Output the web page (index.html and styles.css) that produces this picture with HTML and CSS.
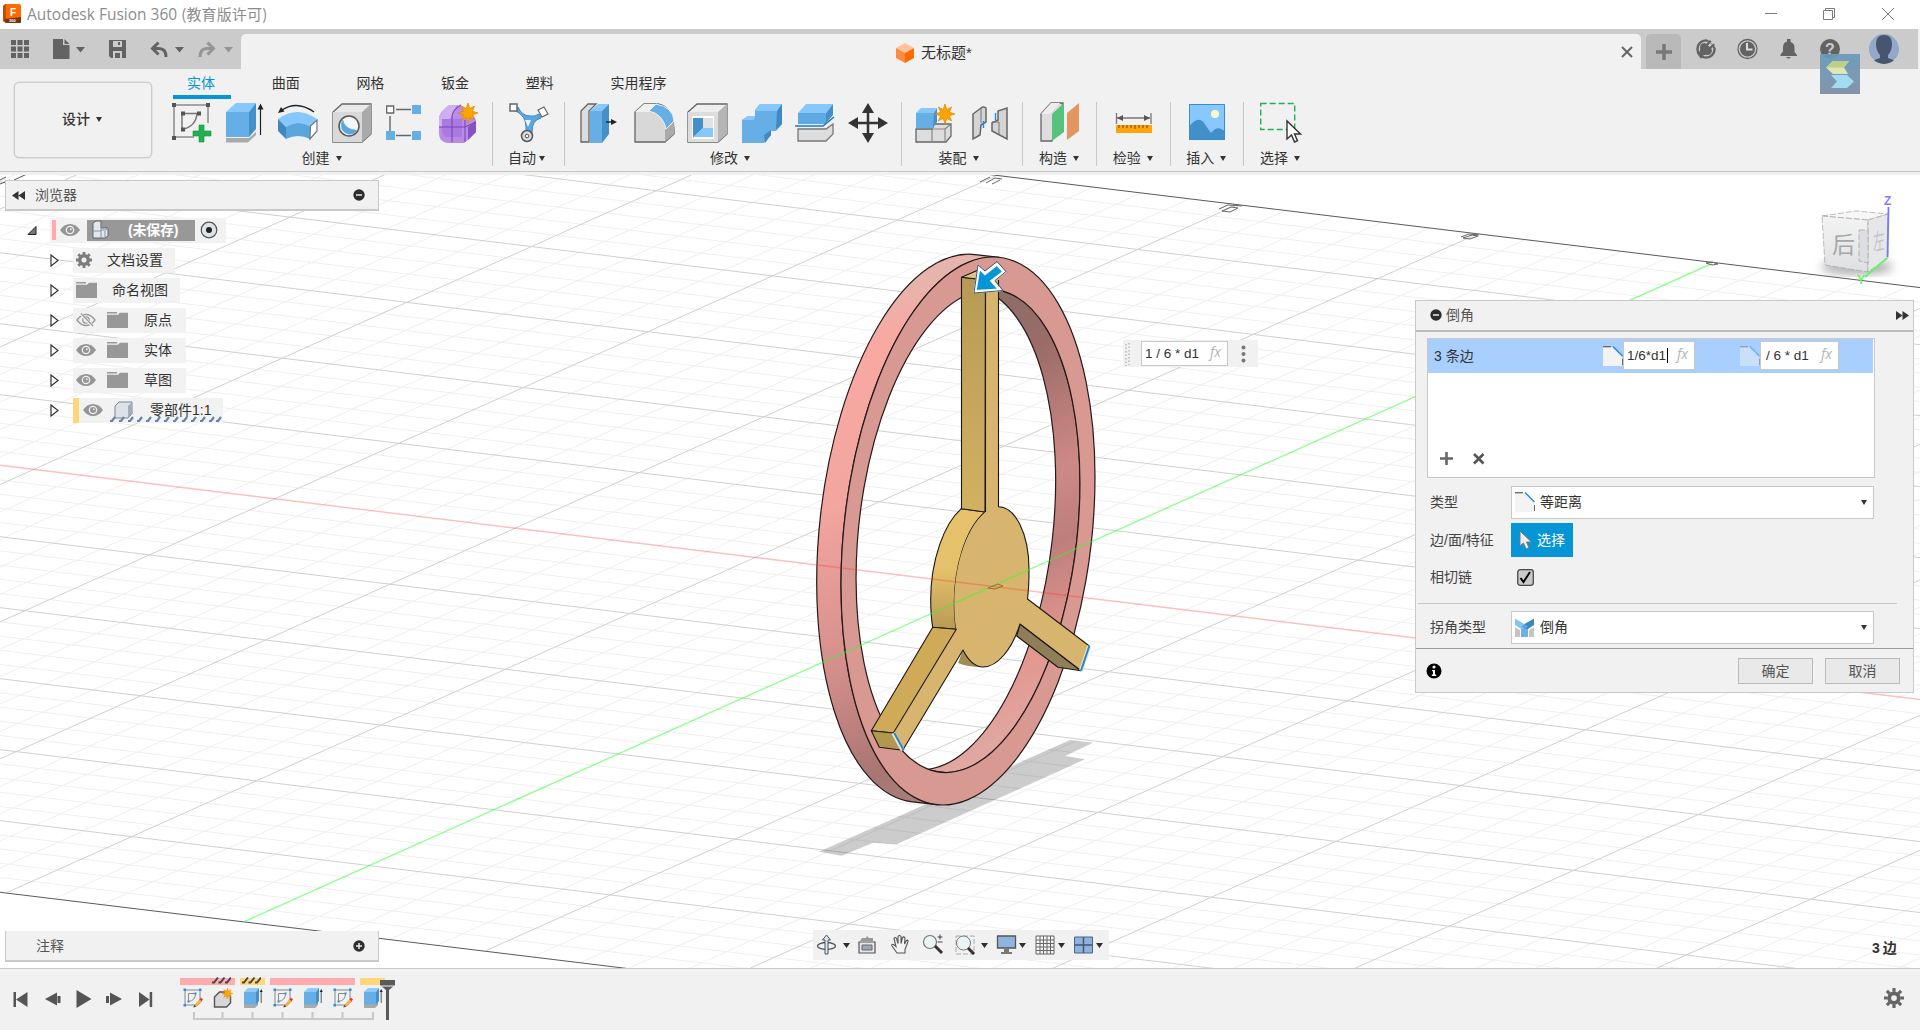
FILE: index.html
```html
<!DOCTYPE html>
<html lang="zh-CN">
<head>
<meta charset="utf-8">
<title>Autodesk Fusion 360</title>
<link rel="stylesheet" href="styles.css">
</head>
<body>
<svg width="0" height="0" class="defs" aria-hidden="true">
  <defs>
    <symbol id="star" viewBox="0 0 20 20"><path d="M10 0l1.800 5.600L16.600 3l-2.200 5.200L20 10l-5.600 1.800 2.200 5-4.800-2.400L10 20l-1.800-5.600L3.400 16.800l2.200-5L0 10l5.600-1.800L3.400 3l4.800 2.600z" fill="#fca400" stroke="#d98a00" stroke-width=".7"/></symbol>
    <symbol id="eye" viewBox="0 0 20 12"><path d="M0 6Q4 0 10 0t10 6q-4 6-10 6T0 6z" fill="#959595"/><circle cx="10" cy="6" r="4.300" fill="#f1f1f1"/><circle cx="10" cy="6" r="3" fill="#959595"/><path d="M10 6V4.500h1.600V6z" fill="#f1f1f1"/></symbol>
    <symbol id="eye-off" viewBox="0 0 20 14"><path d="M1 7q4-5.500 9-5.500T19 7q-4 5.500-9 5.500T1 7z" fill="none" stroke="#999" stroke-width="1.300"/><circle cx="10" cy="7" r="3.200" fill="none" stroke="#999" stroke-width="1.300"/><path d="M4 0l13 13.500" stroke="#f1f1f1" stroke-width="3"/><path d="M5 .5l12 12.500" stroke="#999" stroke-width="1.200"/></symbol>
    <symbol id="folder" viewBox="0 0 21 16"><path d="M0 0h10v1.500H0zM0 2.800h11l2-2h8V16H0z" fill="#989898"/></symbol>
    <symbol id="tri" viewBox="0 0 9 13"><path d="M1 1v11l7-5.500z" fill="#fff" stroke="#333" stroke-width="1.200"/></symbol>
    <symbol id="minus" viewBox="0 0 12 12"><circle cx="6" cy="6" r="5.700" fill="#2e2e2e"/><path d="M3 6h6" stroke="#eee" stroke-width="1.500"/></symbol>
    <symbol id="chamfer" viewBox="0 0 20 20"><path d="M0 1h9l10 9v10H0z" fill="#f3f3f3"/><path d="M0 .7h8" stroke="#666" stroke-width="1.300"/><path d="M19.500 13v6" stroke="#666"/><path d="M10 .5l9.500 9.500" stroke="#2a8be0" stroke-width="1.500"/></symbol>
    <symbol id="t-sketch" viewBox="0 0 20 20"><path d="M2 2h15v12M2 2v15h11" fill="none" stroke="#888"/><path d="M5.500 5.500h7q0 7-7 8z" fill="none" stroke="#888"/><g fill="#2f8fdd"><path d="M.5.500h2.500v2.500H.5zM16 .5h2.500v2.500H16zM.5 16h2.500v2.500H.5zM11.500 4.500h2v2h-2zM4.500 12.500h2v2h-2z"/></g><path d="M12 17l5-6 2 2-5 5-3 1z" fill="#f6b73c" stroke="#c98a2c" stroke-width=".5"/><path d="M16.500 11.500l1.500-2 2 2-1.500 1.700z" fill="#e33"/><path d="M11.300 17l-1 2.500 3-1z" fill="#444"/></symbol>
    <symbol id="t-box" viewBox="0 0 20 20"><path d="M1 16h11l3-3v4l-3 3H1z" fill="#aaa"/><path d="M1 4l4-4h11l-3 4z" fill="#8ccbfb"/><path d="M1 4h12v12.500H1z" fill="#66aee6"/><path d="M13 4l3-4v13l-3 3.500z" fill="#4390ca"/><path d="M18.200 15V3" stroke="#444" stroke-width=".9"/><path d="M16.700 4l1.500-3 1.500 3z" fill="#222"/></symbol>
    <symbol id="t-form" viewBox="0 0 20 20"><path d="M1.500 9l5-5h7l4 4v7l-4 4h-12z" fill="#d7d7d7" stroke="#555" stroke-width="1.400"/></symbol>
    <symbol id="hatch" viewBox="0 0 19 8"><path d="M0 6.500h2l4-5M6.500 6.500h2l4-5M13 6.500h2l4-5" fill="none" stroke="#444" stroke-width="2"/></symbol>
  </defs>
</svg>
<div class="app">
  <header class="title-bar">
    <svg class="logo" width="20" height="22" viewBox="0 0 20 22"><path d="M2 1h14q2 0 2 2v16q0 1-2 1H3L0 18V3z" fill="#ff6b00"/><path d="M0 3l3-2v19l-3-2z" fill="#c64d00"/><path d="M1 16l17-2v5.500q0 .5-2 .5H3z" fill="#7c3410"/><text x="7" y="12.500" class="logo-f">F</text><text x="6" y="19" class="logo-n">360</text></svg>
    <span class="app-name">Autodesk Fusion 360 <span class="cjk">(教育版许可)</span></span>
    <svg class="win" width="150" height="20" viewBox="0 0 150 20" fill="none" stroke="#7c7c7c"><path d="M10 9.500h12M68.500 6.500h9v9h-9zM70.500 6V4.500h9v9H78M127 4l12 12M139 4l-12 12"/></svg>
  </header>
  <div class="tab-strip">
    <div class="quick">
      <svg width="241" height="40" viewBox="0 29 241 40"><g fill="#636363"><path d="M11 40h5v5h-5zM17.500 40h5v5h-5zM24 40h5v5h-5zM11 46.500h5v5h-5zM17.500 46.500h5v5h-5zM24 46.500h5v5h-5zM11 53h5v5h-5zM17.500 53h5v5h-5zM24 53h5v5h-5z"/><path d="M53 39h10v6h6.500v14H53zM64.500 39l5 5h-5zM76 47h9l-4.500 5.500zM175 47h9l-4.500 5.500z"/><path d="M109 40h17v18h-15l-2-2z"/></g><path d="M113 41h9v6h-9zM113 51h9v7h-9z" fill="#ccc"/><path d="M118 42h2v3h-2zM115 53h5v5h-5z" fill="#636363"/><path d="M153 48.500h6q7 0 7 8.500M158.500 42.500l-6 6 6 6" fill="none" stroke="#636363" stroke-width="3"/><g stroke="#959595"><path d="M213 48.500h-6q-7 0-7 8.500M207.500 42.500l6 6-6 6" fill="none" stroke-width="3"/></g><path d="M224 47h9l-4.500 5.500z" fill="#959595"/></svg>
    </div>
    <div class="doc-tab">
      <div class="doc-name">
        <svg width="18" height="20" viewBox="0 0 18 20"><path d="M9 0l9 5-9 5-9-5z" fill="#ffc29b"/><path d="M0 5l9 5v10l-9-5z" fill="#ff8b3e"/><path d="M18 5l-9 5v10l9-5z" fill="#fe6b00"/></svg>
        <span>无标题*</span>
      </div>
      <svg class="doc-close" width="12" height="12" viewBox="0 0 12 12"><path d="M1 1l10 10M11 1L1 11" stroke="#666" stroke-width="2"/></svg>
    </div>
    <div class="new-tab"><svg width="16" height="16"><path d="M8 0v16M0 8h16" stroke="#777" stroke-width="3.500"/></svg></div>
    <svg class="status" width="237" height="40" viewBox="1681 29 237 40">
      <circle cx="1706" cy="49" r="8.600" fill="none" stroke="#636363" stroke-width="2.400"/>
      <path d="M1707 39l10 1v9z" fill="#cbcbcb"/><path d="M1697 53q4-1 3-5 0-5 5-5l1 1 4-4 1.500 1.500-3.500 4 1.500 1.500 4-3.500 1.500 1.500-4 4 1 1q0 5-5 5-4-1-6 4z" fill="#636363"/>
      <circle cx="1747.500" cy="49" r="9.500" fill="none" stroke="#636363" stroke-width="1.300"/>
      <circle cx="1747.500" cy="49" r="7.500" fill="#636363"/><path d="M1747 43v6.500h5.500" fill="none" stroke="#ddd" stroke-width="2"/>
      <path d="M1780.500 56v-1.500l2.500-3v-4q0-5 4-6v-2.500h3.500V42q4 1 4 6v4l2.500 3v1zM1786 57h5q-2.500 3-5 0z" fill="#636363"/>
      <circle cx="1830" cy="49" r="10" fill="#636363"/><text x="1830" y="55" class="help">?</text>
      <clipPath id="av"><circle cx="1884" cy="49" r="15"/></clipPath><g clip-path="url(#av)"><path d="M1869 34h30v30h-30z" fill="#93a8c8"/><path d="M1884 35q8 0 8 9 0 7-4 11v3l8 3v4h-24v-4l8-3v-3q-4-4-4-11 0-9 8-9z" fill="#46566f"/></g>
    </svg>
  </div>
  <div class="ribbon">
    <button class="workspace">设计<i class="caret"></i></button>
    <div class="ribbon-main">
      <nav class="tabs"><a class="active">实体</a><a>曲面</a><a>网格</a><a>钣金</a><a>塑料</a><a class="wide">实用程序</a></nav>
      <div class="groups">
        <section class="g-create"><div class="icons">
          <svg width="40" height="42"><path d="M3 4v31h20M3 3h34v18" fill="none" stroke="#8a8a8a" stroke-width="1.500"/><path d="M11 11.500h15q-1 13-15 16z" fill="none" stroke="#777" stroke-width="1.500"/><path d="M1 1h4v4H1zM35 1h4v4h-4zM1 34h4v4H1zM10 9.500h4v4h-4zM26 9.500h4v4h-4zM10 25.500h4v4h-4z" fill="#555"/><path d="M28 23h5v6h7v5h-7v6h-5v-6h-6v-5h6z" fill="#21b04f" stroke="#159040" stroke-width=".6"/></svg>
          <svg width="40" height="42"><path d="M1 36h23l7-6v3l-8 7.500H1z" fill="#aaa"/><path d="M1 10l10-9h20l-7 9z" fill="#86c8fb"/><path d="M1 10h23v25H1z" fill="#66aee6"/><path d="M24 10l7-9v26l-7 8z" fill="#4390ca"/><path d="M35.500 33V5" stroke="#222" stroke-width="1.200"/><path d="M32.500 7.500l3-6 3 6z" fill="#222"/></svg>
          <svg width="42" height="42"><path d="M0 17Q19 3 39 17l-6 8q-13-8-25 0z" fill="#86c8fb"/><path d="M8 25q12-8 25 0l-1 12q-12-6-24 0z" fill="#5aa6df"/><path d="M0 17l8 8v12l-8-8z" fill="#3d88c2"/><path d="M32.500 24l6.500-6v11l-7 8z" fill="#fff" stroke="#777" stroke-width="1.200"/><path d="M4 8Q19-2 36 10" fill="none" stroke="#222" stroke-width="1.400"/><path d="M0 11l3-6 3.500 4.500z" fill="#222"/></svg>
          <svg width="40" height="42"><path d="M1 10l9-8h29v30l-9 8H1z" fill="#e9e9e9" stroke="#666" stroke-width="1.300"/><path d="M1 10h29v30H1z" fill="#d9d9d9"/><path d="M30 10l9-8v30l-9 8z" fill="#aaa"/><circle cx="17" cy="24" r="10" fill="#f5f5f5" stroke="#555" stroke-width="1.500"/><path d="M11 17q1 10 14 11-3 5-8 4.500-8-2-8-9 0-4 2-6.500z" fill="#59a7e2"/></svg>
          <svg width="40" height="42"><path d="M4 14v15M10 7.500h15M10 33.500h15" stroke="#666" stroke-width="1.400"/><path d="M.7 4h7v7h-7z" fill="#fff" stroke="#666" stroke-width="1.300"/><path d="M26 3h9v9h-9zM0 29h9v9H0zM26 29h9v9h-9z" fill="#66aee6"/></svg>
          <svg width="42" height="42"><path d="M0 15q1-5 10-12h8q13 2 19 15v12l-8 8-4 3H8q-8-2-8-9z" fill="#ba8ce8"/><path d="M0 15Q3 8 10 3h8l-4 8-2 4-9 10H0z" fill="#cfaef2"/><path d="M3 17h20v18H7q-4-2-4-7z" fill="#a97be0"/><path d="M29 25l8-6v11l-8 8z" fill="#8453c4"/><path d="M0 25h26l11-5M13 40V15q0-7 9-12M26 40V18" fill="none" stroke="#7846b8" stroke-width="1.100"/><use href="#star" x="19" y="1" width="20" height="20"/></svg>
        </div><label>创建<i class="caret"></i></label></section>
        <section class="g-auto"><div class="icons"><svg width="40" height="42"><path d="M9 5q4 9 12 9 5 1 9-2l2 4q-9 2-9 14v2h-6V25Q17 14 7 9z" fill="#5aa7e3" stroke="#3b88c4"/><path d="M16 18h6l-3 7z" fill="#f1f1f1"/><path d="M1 2h7v7H1z" fill="#fff" stroke="#666" stroke-width="1.500"/><path d="M29 8l6-3 4 7-6 3z" fill="#fff" stroke="#666" stroke-width="1.200"/><circle cx="18" cy="34" r="5.500" fill="#ddd" stroke="#555" stroke-width="1.500"/><circle cx="18" cy="34" r="1.800" fill="#fff" stroke="#555"/></svg></div><label>自动<i class="caret tight"></i></label></section>
        <section class="g-modify"><div class="icons">
          <svg width="40" height="42"><path d="M1 9l7-7h8L9 9v31H1z" fill="#ddd" stroke="#666" stroke-width="1.300"/><path d="M10 9l8-7h11l-7 7z" fill="#86c8fb"/><path d="M10 9h12v32H10z" fill="#66aee6"/><path d="M22 9l7-7v30l-7 9z" fill="#4390ca"/><path d="M26 20h9" stroke="#222" stroke-width="1.400"/><path d="M31 17l6 3-6 3z" fill="#222"/></svg>
          <svg width="42" height="42"><path d="M1 10l9-8h14q15 3 16 26v4l-9 8H1z" fill="#d8d8d8" stroke="#666" stroke-width="1.300"/><path d="M1 10l9-8h14l-8 8z" fill="#f0f0f0"/><path d="M31 28l9-8v12l-9 8z" fill="#aaa"/><path d="M15 9l7-7q17 3 18 17l-8 8Q29 12 15 9z" fill="#66aee6" stroke="#f1f1f1"/></svg>
          <svg width="42" height="42"><path d="M1 10l9-8h30v30l-9 8H1z" fill="#eee" stroke="#666" stroke-width="1.300"/><path d="M1 10h30v30H1z" fill="#ddd"/><path d="M31 10l9-8v30l-9 8z" fill="#b5b5b5"/><path d="M5 14h22v23H5z" fill="#fff"/><path d="M6 16h10v10l-10 10z" fill="#4390ca"/><path d="M6 35l10-9h10v9z" fill="#86c8fb"/><path d="M16 16h10v10H16z" fill="#e2e2e2"/></svg>
          <svg width="42" height="42"><path d="M1 18l6-4h7V8l5-6h22v20l-6 7h-5v4l-7 8H1z" fill="#66aee6"/><path d="M1 18l6-4h7l-1 4zM14 9l5-7h22l-5 7z" fill="#86c8fb"/><path d="M36 9l5-7v20l-6 6zM23 33l7-5v5l-6 8z" fill="#3f8ac6"/></svg>
          <svg width="42" height="42"><path d="M3 11l8-9h27l-7 9z" fill="#86c8fb"/><path d="M3 11h28v11H3z" fill="#5faae3"/><path d="M31 11l7-9v11l-7 8z" fill="#4390ca"/><path d="M0 24h28l11-9" fill="none" stroke="#1979c6" stroke-width="1.500"/><path d="M3 27h28l7-5v10l-7 7H3z" fill="#ddd" stroke="#777" stroke-width="1.300"/></svg>
          <svg width="42" height="42"><path d="M20 8v26M7 21h26" stroke="#333" stroke-width="2.500"/><path d="M20 1l6 10H14zM20 41l6-10H14zM0 21l10-6v12zM40 21l-10-6v12z" fill="#333"/></svg>
        </div><label>修改<i class="caret"></i></label></section>
        <section class="g-assemble"><div class="icons">
          <svg width="42" height="42"><path d="M1 27h16V22h19v12l-5 6H1z" fill="#ddd" stroke="#666" stroke-width="1.300"/><path d="M17 40V27h13v13M30 27l6-5" fill="none" stroke="#888" stroke-width="1.200"/><path d="M1 11l5-5h16l-3 5z" fill="#86c8fb"/><path d="M1 11h18v15H1z" fill="#66aee6"/><path d="M19 11l3-5v14l-4 6z" fill="#4390ca"/><use href="#star" x="20" y="2" width="20" height="20"/></svg>
          <svg width="42" height="42"><path d="M4 12l8-6q2-2 5 0v14l-5 3-1 10-7 4zM38 6v31L23 29v-8l6-3V9z" fill="#d4d4d4" stroke="#666" stroke-width="1.500"/><path d="M12 6v15M23 20h7v12" fill="none" stroke="#777"/><path d="M14.500 19v7M26.500 11v7" stroke="#188be8" stroke-width="1.400"/></svg>
        </div><label>装配<i class="caret"></i></label></section>
        <section class="g-construct"><div class="icons"><svg width="42" height="42"><path d="M1 12L11 1h12L12 39H1z" fill="#ddd" stroke="#666" stroke-width="1.300"/><path d="M1 12h9L20 1H11z" fill="#eee"/><path d="M12 12L24 1v29L12 39z" fill="#56c27d"/><path d="M27 11L39 1v28l-12 9z" fill="#e59562"/></svg></div><label>构造<i class="caret"></i></label></section>
        <section class="g-inspect"><div class="icons"><svg width="42" height="42"><path d="M2 16h33M1.500 11v11M36 11v11" stroke="#777" stroke-width="1.300"/><path d="M2 16l6-3v6zM35 16l-6-3v6z" fill="#555"/><path d="M1 23h36v8H1z" fill="#fca50a"/><path d="M4 23v3M8 23v3M12 23v3M16 23v3M20 23v4M24 23v3M28 23v3M32 23v3" stroke="#875600" stroke-width="1.200"/></svg></div><label>检验<i class="caret"></i></label></section>
        <section class="g-insert"><div class="icons"><svg width="42" height="42"><path d="M1 2h36v36H1z" fill="#86c8ff"/><path d="M1 25q10-14 17-1l5 7q7-9 14-1v8H1z" fill="#4190cb"/><circle cx="27" cy="12" r="4" fill="#fcfbc8"/><path d="M1.500 2.500h35v35h-35z" fill="none" stroke="#3d8cc8"/></svg></div><label>插入<i class="caret"></i></label></section>
        <section class="g-select"><div class="icons"><svg width="42" height="42"><path d="M.7 1.500h34v26h-34z" fill="none" stroke="#29ac55" stroke-width="1.400" stroke-dasharray="6 3"/><path d="M27 19v18l4.500-4 3 7 3-1.300-3-6.700h6z" fill="#fff" stroke="#333" stroke-width="1.400"/></svg></div><label>选择<i class="caret"></i></label></section>
      </div>
    </div>
    <svg class="capture" width="40" height="40"><defs><linearGradient id="cp" x2="0" y2="1"><stop stop-color="#6a9bbd"/><stop offset="1" stop-color="#7b8da3"/></linearGradient></defs><path d="M0 0h40v40H0z" fill="url(#cp)"/><path d="M6 13.500L13 7h16l-5 6.500 4 6.500H13z" fill="#dce8b2"/><path d="M6 13.500L13 7h16l-5 6.500z" fill="#bccf84"/><path d="M11 21h16l7 6.500-7 6.500H11l6-6.500z" fill="#9edaf3"/></svg>
  </div>
  <main class="canvas">
    <svg class="scene" width="1920" height="793" viewBox="0 175 1920 793">
      <defs>
        <linearGradient id="side" gradientUnits="userSpaceOnUse" x1="0" y1="-1" x2="0" y2="1"><stop stop-color="#e6b4ac"/><stop offset=".07" stop-color="#f7a9a2"/><stop offset=".35" stop-color="#f3a59f"/><stop offset=".65" stop-color="#d48f8b"/><stop offset=".88" stop-color="#a87572"/><stop offset=".97" stop-color="#a8807c"/><stop offset="1" stop-color="#d9c8c2"/></linearGradient>
        <linearGradient id="wall" gradientUnits="userSpaceOnUse" x1="0" y1="-.9" x2="0" y2=".9"><stop stop-color="#8a6d67"/><stop offset=".18" stop-color="#9b6c68"/><stop offset=".45" stop-color="#ce8985"/><stop offset=".6" stop-color="#bd7e7b"/><stop offset=".8" stop-color="#e2968f"/><stop offset="1" stop-color="#e0aaa3"/></linearGradient>
        <linearGradient id="bar" x2="0" y2="1"><stop stop-color="#b69a54"/><stop offset=".25" stop-color="#bea058"/><stop offset="1" stop-color="#d2b162"/></linearGradient>
        <linearGradient id="hub" x2="0" y2="1"><stop stop-color="#e7c16b"/><stop offset=".5" stop-color="#e6c16b"/><stop offset="1" stop-color="#b89a55"/></linearGradient>
        <linearGradient id="cube" x2="0" y2="1"><stop stop-color="#f4f4f4"/><stop offset="1" stop-color="#dedfe1"/></linearGradient>
        <filter id="soft"><feGaussianBlur stdDeviation="5"/></filter>
      </defs>
      <g id="grid"></g>
      <path d="M819 851.700L1070 740l23 2.700-28 13.300 20 3.300-188.300 85-23.400-1.600-31.600 13z" fill="#000" opacity=".2"/>
      <g transform="matrix(127 -54 0 268.600 968 531)" class="ring">
        <path d="M.2474-.969L.0561-1.0179A1 1 0 0 0-.4387 .9201L-.2474 .969A1 1 0 0 1 .2474-.969z" fill="url(#side)"/>
        <path d="M.1213-.8731A.8815 .8815 0 1 1-.3127 .8242A.8815 .8815 0 0 0 .1213-.8731z" fill="url(#wall)"/>
        <path fill-rule="evenodd" d="M1 0A1 1 0 1 1-1 0A1 1 0 1 1 1 0zM.8815 0A.8815 .8815 0 1 1-.8815 0A.8815 .8815 0 1 1 .8815 0z" fill="#d99993"/>
      </g>
      <g stroke="#1b1712" stroke-width="1.100" stroke-linejoin="round">
        <path d="M963 650l-5 13q9 4 24 4z" fill="#a58b51" stroke="none"/>
        <path d="M1020 624l61 46.700-23-3.400-41.300-31.300z" fill="#8f7e57"/>
        <path d="M961.300 508.700C944 524 930.700 560 930.700 600c0 11 .8 20 2 27.300l23.600 2C954.500 620 954.300 612 954.300 602c.2-32 9.700-72 30.700-90z" fill="url(#hub)"/>
        <path d="M961.500 277.300l24 2.700-.5 232-23.500-3.300z" fill="url(#bar)"/>
        <path d="M961.500 277.300l15-6.600 22 4-13 5.300z" fill="#ddc28a"/>
        <path d="M985.500 280l13-4v230.700C1015 507 1029 533 1029 570c0 10-.3 20-1.500 29l61.800 47-8.300 24.700-61-46.700C1012 650 997 667 983 667c-9 0-15-7-20-17l-60.300 100.300-9.400-17.300 63-103.700C954.500 620 954.300 612 954.300 602c.2-32 9.700-72 31.200-90z" fill="#d7b56e" stroke="none"/>
        <path d="M985.500 280v232M998.500 280v226.700C1015 507 1029 533 1029 570c0 10-.3 20-1.500 29l61.800 47M1081 670.700l-61-46.700C1012 650 997 667 983 667c-9 0-15-7-20-17l-60.300 100.300" fill="none"/>
        <path d="M932.700 627.300l23.600 2-63 103.700-22-2.300z" fill="#cfab59"/>
        <path d="M871.300 730.700l22 2.300 9.400 17.300-23.400-3z" fill="#b19750"/>
      </g>
      <path d="M893.300 733l9.400 17.300M1089.300 646l-8.300 24.700" stroke="#f4e4b8" stroke-width="4"/>
      <path d="M894.300 733l9.400 17.300M1089.300 646l-8.300 24.700" stroke="#1288ee" stroke-width="2"/>
      <path d="M0 465.300L1920 699.500" stroke="#ff2a2a" stroke-opacity=".3" stroke-width="1.400"/>
      <path d="M244.600 921.500L1712 263.500" stroke="#28ff28" stroke-opacity=".5" stroke-width="1.400"/>
      <path d="M988 588l10-4 5 2-8 3z" fill="none" stroke="#a06b35"/>
      <path d="M975 291.500l4-24 6 6 12-9.500 7 8-12 9 8 9z" fill="#0696d7" stroke="#fff" stroke-width="3"/><path d="M974 293l4-28 7 6 12-9.500 9 10-11 9 8 10z" fill="none" stroke="#3c5b7a"/>
      <g class="ticks" fill="none" stroke="#666"><path d="M980 182l10-5M986 183l9-5 7 1M992 184l8-4M1219 209l9-4 14 1M1222 211l9-4 7 1-8 4zM1461 237l8-3 10 1M1463 238l9-3 6 1-8 3zM1706 263l6 2 6-1-6-2z"/></g>
      <path d="M0 184l10-4M14 180l13-6M0 180l6-3" stroke="#555"/>
      <ellipse cx="1857" cy="267" rx="36" ry="8" fill="#777" opacity=".55" filter="url(#soft)"/>
      <g class="view-cube"><path d="M1822 216l34-5 32 3-20 6z" fill="#f7f7f7"/><path d="M1822 216l46 4v52l-43-7z" fill="url(#cube)"/><path d="M1868 220l20-6v44l-20 14z" fill="#e7e7ea"/><path d="M1859 230h9v33l-9-2z" fill="#dcdee4" stroke="none"/>
        <text x="1832" y="253">后</text><text class="faint" transform="matrix(.5 -.12 0 1 1873 251)">左</text></g>
      <path d="M1888.500 207l-1 50" stroke="#7777ff" stroke-width="1.800"/><path d="M1887 258l-22 19" stroke="#62f862" stroke-width="1.800"/>
      <text x="1884" y="204.500" class="axis z">Z</text><text x="1857" y="284" class="axis y">Y</text>
    </svg>
    <div class="browser">
      <div class="panel-head"><svg width="13" height="9"><path d="M6.500 0v9L0 4.500zM13 0v9L6.500 4.500z" fill="#333"/></svg><span>浏览器</span><svg width="12" height="12"><use href="#minus"/></svg></div>
      <ul class="tree">
        <li class="root"><svg class="arrow" width="10" height="9"><path d="M9 .5V8.500H1z" fill="#777" stroke="#222"/></svg><div class="chip"><i class="mark pink"></i><svg width="20" height="12"><use href="#eye"/></svg><div class="sel"><svg width="20" height="20"><path d="M2 3l3-2h5v7h7v8l-3 2H2z" fill="#e3e8ee" stroke="#5d6670"/><path d="M2 11h8V3M10 11v7M10 10h5l2-2M14 11v6" fill="none" stroke="#8a949f"/></svg><b>(未保存)</b></div><svg width="18" height="18"><circle cx="9" cy="9" r="7.800" fill="#dfe3e8" stroke="#555" stroke-width="1.200"/><circle cx="9" cy="9" r="3" fill="#222"/></svg></div></li>
        <li><svg class="arrow" width="9" height="13"><use href="#tri"/></svg><div class="chip w1"><svg width="16" height="16"><circle cx="8" cy="8" r="4.300" fill="none" stroke="#7d7d7d" stroke-width="3.600"/><path d="M8 0v3M8 13v3M0 8h3M13 8h3M2.300 2.300l2.200 2.200M11.500 11.500l2.200 2.200M13.700 2.300l-2.200 2.200M4.500 11.500l-2.200 2.200" stroke="#7d7d7d" stroke-width="2.800"/></svg><span>文档设置</span></div></li>
        <li><svg class="arrow" width="9" height="13"><use href="#tri"/></svg><div class="chip w2"><svg width="21" height="16"><use href="#folder"/></svg><span>命名视图</span></div></li>
        <li><svg class="arrow" width="9" height="13"><use href="#tri"/></svg><div class="chip w3"><svg width="20" height="14"><use href="#eye-off"/></svg><svg width="21" height="16"><use href="#folder"/></svg><span>原点</span></div></li>
        <li><svg class="arrow" width="9" height="13"><use href="#tri"/></svg><div class="chip w3"><svg width="20" height="12"><use href="#eye"/></svg><svg width="21" height="16"><use href="#folder"/></svg><span>实体</span></div></li>
        <li><svg class="arrow" width="9" height="13"><use href="#tri"/></svg><div class="chip w3"><svg width="20" height="12"><use href="#eye"/></svg><svg width="21" height="16"><use href="#folder"/></svg><span>草图</span></div></li>
        <li><svg class="arrow" width="9" height="13"><use href="#tri"/></svg><div class="chip w4"><i class="mark gold"></i><svg width="20" height="12"><use href="#eye"/></svg><svg class="body-icon" width="19" height="18"><path d="M1 5l4-4h13v12l-4 4H1z" fill="#dde2e8" stroke="#7d868f"/><path d="M14 5l4-4v12l-4 4z" fill="#a5adb6"/></svg><span>零部件1:1</span><svg class="squiggle" width="112" height="6"><path d="M0 5h2l3-4M9 5h2l3-4M18 5h2l3-4M27 5h2l3-4M36 5h2l3-4M45 5h2l3-4M54 5h2l3-4M63 5h2l3-4M72 5h2l3-4M81 5h2l3-4M90 5h2l3-4M99 5h2l3-4M106 5h2l3-4" fill="none" stroke="#6a83a8" stroke-width="2.200"/></svg></div></li>
      </ul>
    </div>
    <div class="panel-head comments"><span>注释</span><svg width="12" height="12"><use href="#minus"/><path d="M6 3v6" stroke="#eee" stroke-width="1.500"/></svg></div>
    <div class="float-input"><svg width="10" height="26"><path d="M3 3v22M6 2v22" stroke="#bbb" stroke-width="1.500" stroke-dasharray="1.500 2"/></svg><div class="field">1 / 6 * d1<em>fx</em></div><svg width="5" height="18" fill="#777"><circle cx="2.500" cy="2.500" r="2"/><circle cx="2.500" cy="9" r="2"/><circle cx="2.500" cy="15.500" r="2"/></svg></div>
    <aside class="dialog">
      <div class="dlg-head"><svg width="12" height="12"><use href="#minus"/></svg><span>倒角</span><svg width="13" height="9"><path d="M0 0v9l6.500-4.500zM6.500 0v9L13 4.500z" fill="#333"/></svg></div>
      <div class="dlg-body">
        <div class="edges">
          <div class="edge-row"><span>3 条边</span><svg width="20" height="20"><use href="#chamfer"/></svg><div class="field f1">1/6*d1<i></i><em>fx</em></div><svg class="dim" width="20" height="20"><use href="#chamfer"/></svg><div class="field f2">/ 6 * d1<em>fx</em></div></div>
          <svg class="edge-tools" width="60" height="14"><path d="M6.500 0v13M0 6.500h13" stroke="#666" stroke-width="2.600"/><path d="M34 2l9.500 9.500M43.500 2L34 11.500" stroke="#555" stroke-width="2.600"/></svg>
        </div>
        <div class="row r-type"><span>类型</span><div class="select"><svg width="20" height="20"><use href="#chamfer"/></svg>等距离<i class="caret"></i></div></div>
        <div class="row r-pick"><span>边/面/特征</span><button class="pick"><svg width="14" height="20"><path d="M1 1v15l3.500-3 2.500 6 3-1.300-2.500-5.700h5z" fill="#eee" stroke="#777"/></svg>选择</button></div>
        <div class="row r-chain"><span>相切链</span><svg width="17" height="17"><rect x=".7" y=".7" width="15.600" height="15.600" rx="2.500" fill="#c9c9c9" stroke="#4a4a4a" stroke-width="1.300"/><path d="M3.500 9l3 4 6.500-10" fill="none" stroke="#000" stroke-width="2"/></svg></div>
        <div class="row r-corner"><span>拐角类型</span><div class="select"><svg width="20" height="20"><path d="M0 10l5 3v7H0zM19 10l-5 3v7h5z" fill="#c4c4c4"/><path d="M6 10h7v10H6z" fill="#69b1e8"/><path d="M0 1.500l9.500 5.500v5L6 12 0 8z" fill="#86c4f3"/><path d="M19 1.500L9.500 7v5h3.500l6-4z" fill="#3d87bf"/><path d="M6.500 9.500l3-2.500 3.500 2.500-3.500 3z" fill="#5aa3dc"/></svg>倒角<i class="caret"></i></div></div>
      </div>
      <div class="dlg-foot"><svg width="16" height="16"><circle cx="8" cy="8" r="7.500"/><circle cx="8" cy="4" r="1.600" fill="#fff"/><path d="M6 7h3v4.500h1.200V13H5.800v-1.500H7V8.300H6z" fill="#fff"/></svg><button>确定</button><button>取消</button></div>
    </aside>
    <div class="nav-bar">
      <svg width="296" height="30" viewBox="813 930 296 30"><g fill="#2f2f2f"><path d="M843 943h7l-3.500 5zM981 943h7l-3.500 5zM1019 943h7l-3.500 5zM1058 943h7l-3.500 5zM1096 943h7l-3.500 5z"/></g>
        <ellipse cx="826.500" cy="946" rx="9" ry="3.500" fill="none" stroke="#555" stroke-width="1.300"/><path d="M825 954v-14h-2.500l4-5 4 5h-2.500v14z" fill="#dfe6ee" stroke="#49545f"/>
        <path d="M859 942h16v11h-16z" fill="#e4e8ec" stroke="#555" stroke-width="1.200"/><path d="M862 945h10v5h-10z" fill="#9ba8b6" stroke="#666"/><path d="M860 941l2-3h4l1-2 2 2h4v3z" fill="#999"/>
        <path d="M897 953l-5-7q-1-2 1.500-1.500l2.500 2-2-8q1-2 2.500 0l1.500 5v-7q1.500-2 3 0v7l1.500-6q1.500-1.500 2.500.5l-.5 6 2-3.500q2-1 1.500 1l-3 8v3.500z" fill="#f4f4f4" stroke="#555" stroke-width="1.100"/>
        <circle cx="930" cy="942" r="6.500" fill="#e9f4f4" stroke="#777" stroke-width="1.200"/><path d="M935 946l7 7" stroke="#333" stroke-width="3"/><path d="M937.500 937h5M940 934.500v5M937.500 942h5" stroke="#444"/>
        <path d="M956 936h18v18h-18z" fill="none" stroke="#aaa" stroke-dasharray="5 2"/><circle cx="963.500" cy="943" r="7" fill="#e9f4f4" stroke="#777"/><path d="M968 948l6 6" stroke="#333" stroke-width="3"/>
        <path d="M997.500 936h18v12h-18z" fill="#8fb4df" stroke="#555" stroke-width="1.300"/><path d="M1004 949h5v3h3v2h-11v-2h3z" fill="#777"/>
        <path d="M1036 936h18v18h-18zM1036 940h18M1036 943.500h18M1036 947h18M1036 950.500h18M1040 936v18M1043.500 936v18M1047 936v18M1050.500 936v18" fill="#f4f4f4" stroke="#666"/>
        <path d="M1074.500 937h18v16h-18z" fill="#8fb3dd" stroke="#4b6585"/><path d="M1083.500 937v16M1074.500 945h18" stroke="#3f5775" stroke-width="1.400"/></svg>
    </div>
    <div class="sel-count">3 边</div>
  </main>
  <footer class="timeline">
    <svg class="play" width="180" height="30" viewBox="0 983 180 30" fill="#555"><path d="M13.500 991h2.500v15h-2.500zM27.500 991v15L16 998.500zM57 991.500v13L45 998zM57.500 995h3v7h-3zM76.500 989v18l15-9zM110 991.500v13l12-6.500zM106 995h3v7h-3zM139 991v15l10.500-7.500zM149.700 991h2.500v15h-2.500z"/></svg>
    <div class="track">
      <div class="feat pink"><svg class="over" width="19" height="8"><use href="#hatch"/></svg><div><svg width="20" height="20"><use href="#t-sketch"/></svg><svg width="20" height="20"><use href="#t-form"/><use href="#star" x="9" y="0" width="11" height="11"/></svg></div></div>
      <div class="feat gold"><svg class="over" width="19" height="8"><use href="#hatch"/></svg><div><svg width="20" height="20"><use href="#t-box"/></svg></div></div>
      <div class="feat pink"><div><svg width="20" height="20"><use href="#t-sketch"/></svg><svg width="20" height="20"><use href="#t-box"/></svg><svg width="20" height="20"><use href="#t-sketch"/></svg></div></div>
      <div class="feat gold"><div><svg width="20" height="20"><use href="#t-box"/></svg></div></div>
      <svg class="rail" width="220" height="42"><path d="M14 32v7h179v-7M42.500 32v6M72.500 32v6M102.500 32v6M132.500 32v6M162.500 32v6" fill="none" stroke="#c9c9c9" stroke-width="2.200"/><path d="M200 0h15v5l-6 5v30h-3V10l-6-5z" fill="#5a5a5a"/><path d="M201 6h13" stroke="#f1f1f1"/></svg>
    </div>
    <svg class="gear" width="20" height="20" viewBox="0 0 16 16"><circle cx="8" cy="8" r="3.800" fill="none" stroke="#666" stroke-width="3"/><path d="M8 0v3M8 13v3M0 8h3M13 8h3M2.300 2.300l2.200 2.200M11.500 11.500l2.200 2.200M13.700 2.300l-2.200 2.200M4.500 11.500l-2.200 2.200" stroke="#666" stroke-width="2.500"/></svg>
  </footer>
</div>
<script src="grid.js"></script>
</body>
</html>
```
FILE: styles.css
```css
* { box-sizing: border-box; }
body { margin: 0; font: 14px/18px "Liberation Sans", "Noto Sans CJK SC", sans-serif; color: #333; background: #f1f1f1; overflow: hidden; }
svg { display: block; flex: none; }
button { font: inherit; color: inherit; padding: 0; }
.defs { position: absolute; }
.app { width: 1920px; height: 1030px; display: flex; flex-direction: column; }

.title-bar { height: 29px; background: #fff; display: flex; align-items: center; padding: 0 15px 1px 3px; }
.app-name { font: 15.5px/20px "Open Sans", sans-serif; color: #8c8c8c; margin-left: 4px; white-space: nowrap; }
.cjk { font: 15px/20px "Noto Sans CJK SC", sans-serif; letter-spacing: .15px; }
.win { margin-left: auto; }
.logo-f { font: bold 10px "Liberation Sans", sans-serif; fill: #fff; }
.logo-n { font: bold 4px "Liberation Sans", sans-serif; fill: #fff; }

.tab-strip { height: 40px; background: #cbcbcb; display: flex; border-right: 2px solid #f1f1f1; }
.doc-tab { width: 1400px; margin-top: 5px; background: #f1f1f1; border-radius: 5px 5px 0 0; display: flex; align-items: center; justify-content: center; position: relative; }
.doc-name { display: flex; align-items: center; gap: 7px; margin: 3px 0 0 -14px; font: 15px/18px "Liberation Sans", "Noto Sans CJK SC", sans-serif; }
.doc-close { position: absolute; right: 8px; top: 12px; }
.new-tab { width: 35px; margin: 5px 0 0 5px; background: #b9b9b9; border-radius: 5px 5px 0 0; display: grid; place-items: center; }
.status { width: 237px; }
.help { font: bold 16px "Liberation Sans", sans-serif; fill: #ccc; text-anchor: middle; }

.ribbon { height: 106px; display: flex; border-bottom: 3px solid #f1f1f1; box-shadow: inset 0 -1px #c5c5c5; position: relative; padding-left: 14px; }
.workspace { width: 138px; height: 76px; margin-top: 13px; border: 1px solid #cbcbcb; border-radius: 5px; background: #f1f1f1; font-weight: 500; box-shadow: 0 0 0 .5px #d5d5d5; padding: 0 2px 2px 0; }
.caret { display: inline-block; border: 3.500px solid transparent; border-top: 5.500px solid #333; border-bottom: 0; margin-left: 6px; vertical-align: 2px; }
.caret.tight { margin-left: 3px; }
.ribbon-main { display: flex; flex-direction: column; margin-left: 13px; }
.tabs { display: flex; margin-left: 8px; height: 30px; gap: 26.700px; }
.tabs a { width: 58px; text-align: center; padding: 5px 2px 0 0; height: 30px; white-space: nowrap; }
.tabs .active { color: #0696d7; border-bottom: 4px solid #0696d7; }
.tabs .wide { margin-left: 14px; }
.groups { display: flex; margin-top: 3px; }
.groups section { height: 64px; border-right: 1px solid #c9c9c9; display: flex; flex-direction: column; align-items: center; }
.icons { display: flex; width: 100%; height: 42px; }
.groups label { margin-top: 5px; height: 18px; white-space: nowrap; }
.g-create { width: 328px; }
.g-create .icons { padding-left: 6px; }
.g-create .icons svg, .g-modify .icons svg, .g-assemble .icons svg { width: 42px; margin-right: 11.700px; }
.g-create label { margin-left: -14px; }
.g-auto { width: 72px; }
.g-auto .icons { padding-left: 16px; }
.g-auto label { margin-left: -4px; }
.g-modify { width: 337px; }
.g-modify .icons { padding-left: 15px; }
.g-modify label { margin-left: -6px; }
.g-assemble { width: 121px; }
.g-assemble .icons { padding-left: 13px; }
.g-construct { width: 74px; }
.g-inspect, .g-insert { width: 73.500px; }
.g-construct .icons, .g-insert .icons { padding-left: 17px; }
.g-inspect .icons { padding-left: 18px; }
.g-select .icons { padding-left: 16px; }
.g-assemble label { margin-left: -7px; }
.g-construct label, .g-inspect label, .g-insert label, .g-select label { margin-left: -1px; }
.groups .g-select { width: 73px; border: 0; }
.capture { position: absolute; left: 1820px; top: -15px; opacity: .93; }

.canvas { height: 793px; background: #fff; position: relative; }
.ring path { stroke: #241a18; stroke-width: 1.200px; vector-effect: non-scaling-stroke; }
.minor { stroke: #efefef; }
.major { stroke: #d0d0d0; }
.edge { stroke: #5a5a5a; }
.view-cube path { stroke: #aaa; stroke-width: .8; stroke-dasharray: 6 2; }
.view-cube text { font: 23px "Noto Sans CJK SC", sans-serif; fill: #a3a8ad; }
.view-cube .faint { fill: #c2c5c9; }
.axis { font: bold 12px "Liberation Sans", sans-serif; }
.axis.z { fill: #8080ff; }
.axis.y { fill: #66f366; }

.panel-head { width: 374px; height: 31px; background: #f1f1f1; border: 1px solid #c9c9c9; border-bottom-width: 2px; display: flex; align-items: center; padding: 0 13px 0 6px; color: #555; }
.panel-head span { margin: 0 auto 0 10px; }
.browser { position: absolute; left: 5px; top: 5px; }
.comments { position: absolute; left: 5px; top: 756px; border-top: 0; }
.comments span { margin-left: 24px; }
.tree { list-style: none; margin: 4px 0 0; padding: 0; }
.tree li { height: 30px; display: flex; align-items: center; padding-left: 45px; }
.tree li.root { padding-left: 22px; }
.chip { height: 25px; background: #f1f1f1f0; display: flex; align-items: center; margin-left: 14px; position: relative; padding-left: 3px; white-space: nowrap; }
.tree li.root .chip { width: 176px; margin-left: 13px; padding-left: 2px; }
.mark { width: 4px; height: 20px; }
.mark.pink { background: #ffabae; margin-right: 4px; }
.mark.gold { background: #ffd679; height: 25px; width: 6px; margin-right: 4px; }
.sel { width: 108px; height: 21px; background: #989898; display: flex; align-items: center; margin: 0 5px 0 7px; padding-left: 4px; color: #fff; }
.sel b { font-weight: 700; margin-left: 9px; padding-left: 8px; letter-spacing: -.2px; }
.w1 { width: 102px; }
.w1 span { margin-left: 15px; }
.w2 { width: 107px; }
.w2 span { margin-left: 15px; }
.w3 { width: 113px; }
.w3 svg + svg { margin-left: 11px; }
.w3 span { margin-left: 16px; }
.w4 { width: 150px; padding-left: 0; }
.w4 .body-icon { margin-left: 11px; }
.w4 span { margin-left: 17px; }
.w4 .squiggle { position: absolute; left: 37px; top: 18px; }

.field { background: #fff; border: 1px solid #c9c9c9; display: flex; align-items: center; color: #333; white-space: nowrap; font-size: 13.5px; }
.field em { font: italic 14px "Open Sans", sans-serif; color: #b5b5b5; margin: -4px 0 0 auto; }
.float-input { position: absolute; left: 1123px; top: 165px; width: 135px; height: 27px; background: #f1f1f1; display: flex; align-items: center; }
.float-input .field { margin: 0 13px 0 8px; width: 87px; height: 25px; padding: 0 6px 0 3px; }

.dialog { position: absolute; left: 1415px; top: 125px; width: 499px; height: 393px; background: #f1f1f1; border: 1px solid #c9c9c9; display: flex; flex-direction: column; }
.dlg-head { height: 31px; border-bottom: 2px solid #bdbdbd; display: flex; align-items: center; padding: 0 4px 0 14px; color: #555; }
.dlg-head span { margin: 0 auto 0 4px; }
.dlg-body { height: 318px; padding: 6px 0 0 11px; border-bottom: 1px solid #999; }
.edges { width: 448px; height: 140px; background: #fff; border: 1px solid #c9c9c9; display: flex; flex-direction: column; justify-content: space-between; }
.edge-row { height: 34px; width: 445px; background: #a9cfff; display: flex; align-items: center; padding-left: 6px; }
.edge-row span { width: 169px; }
.f1 { width: 72px; height: 29px; padding: 0 6px 0 3px; }
.f1 i { width: 1px; height: 15px; background: #000; margin-left: 1px; }
.edge-row .dim { margin-left: 45px; opacity: .45; }
.f2 { width: 79px; height: 29px; padding: 0 6px 0 5px; }
.edge-tools { margin: 0 0 11px 12px; }
.row { display: flex; align-items: center; padding-left: 3px; }
.row > span { width: 81px; color: #444; white-space: nowrap; }
.select { width: 363px; height: 33px; background: #fff; border: 1px solid #c9c9c9; display: flex; align-items: center; padding: 0 6px 0 3px; gap: 5px; }
.select .caret { margin-left: auto; }
.r-type { margin-top: 8px; }
.r-pick { margin-top: 4px; }
.pick { width: 62px; height: 34px; background: #0696d7; border: 0; color: #fff; display: flex; align-items: center; padding-left: 8px; gap: 4px; }
.r-chain { height: 39px; padding-top: 2px; }
.r-chain svg { margin-left: 6px; }
.r-corner { margin: 7px 16px 0 -9px; padding: 7px 0 0 12px; border-top: 1px solid #c9c9c9; }
.dlg-foot { height: 43px; display: flex; align-items: center; padding: 0 13px 0 10px; gap: 12px; }
.dlg-foot svg { margin-right: auto; }
.dlg-foot button { width: 75px; height: 26px; border: 1px solid #b9b9b9; background: #e9e9e9; color: #555; }

.nav-bar { position: absolute; left: 813px; top: 755px; background: #f1f1f1; }
.sel-count { position: absolute; left: 1872px; top: 764px; font: bold 14px/18px "Liberation Sans", "Noto Sans CJK SC", sans-serif; letter-spacing: -.5px; white-space: nowrap; }

.timeline { flex: 1; border-top: 1px solid #c9c9c9; background: #f1f1f1; display: flex; align-items: flex-start; }
.play { margin-top: 15px; }
.track { display: flex; gap: 5px; margin-top: 9px; position: relative; }
.feat { border-top: 7px solid; position: relative; }
.feat.pink { border-color: #ffabae; }
.feat.gold { border-color: #ffd679; }
.feat > div { display: flex; gap: 10px; padding: 3px 2px 0 3px; }
.over { position: absolute; right: 4px; top: -9px; }
.rail { position: absolute; left: 0; top: 2px; }
.gear { margin: 19px 16px 0 auto; }
```
FILE: grid.js
```js
// Ground plane: (i, j) count major divisions from the origin along X and Y.
const origin = [994.3, 586.8];
const point = (i, j) => [
  origin[0] + 239.3 * i - 0.25 * i * i + 124.6 * j,
  origin[1] + 29.15 * i - 0.03 * i * i - 55.8 * j
];
const NEAR = -6, FAR = 5.8, SIDE = 9;
const line = (a, b, cls) => {
  const [x1, y1] = point(...a), [x2, y2] = point(...b);
  return `<line class="${cls}" x1="${x1}" y1="${y1}" x2="${x2}" y2="${y2}"/>`;
};
let minor = '', major = '';
for (let k = NEAR * 5 + 1; k < FAR * 5 - 0.5; k++) {
  const s = line([-SIDE, k / 5], [SIDE, k / 5], k % 5 ? 'minor' : 'major');
  if (k % 5) minor += s; else if (k) major += s;
}
for (let k = -SIDE * 5; k <= SIDE * 5; k++) {
  const s = line([k / 5, NEAR], [k / 5, FAR], k % 5 ? 'minor' : 'major');
  if (k % 5) minor += s; else if (k) major += s;
}
// The outer edges are straight, so pin them to the slope of the X axis.
const rim = (x, y) => `<line class="edge" x1="${x - 2000}" y1="${y - 243}" x2="${x + 2000}" y2="${y + 243}"/>`;
const edges = rim(244.6, 922) + rim(1712, 262.3);
document.getElementById('grid').innerHTML = minor + major + edges;
```
